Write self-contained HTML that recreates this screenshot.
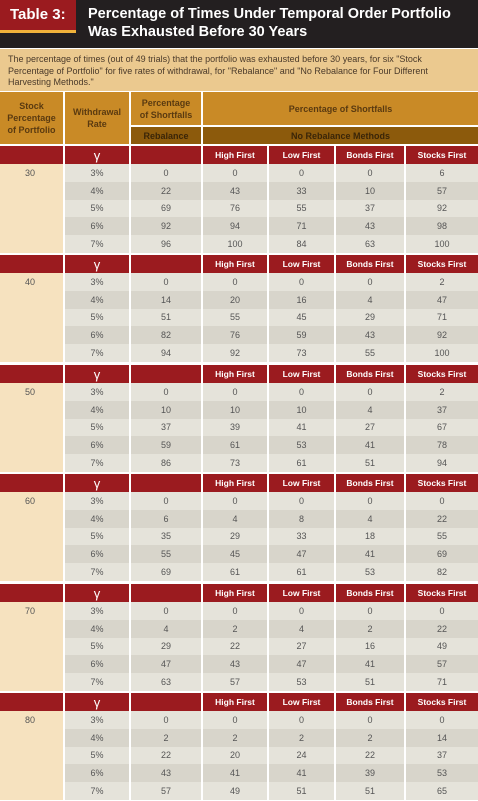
<!DOCTYPE html>
<html><head><meta charset="utf-8"><style>
*{margin:0;padding:0;box-sizing:border-box}
body{width:478px;height:801px;background:#fff;font-family:"Liberation Sans",sans-serif;position:relative;overflow:hidden}
.a{position:absolute}
.c{position:absolute;display:flex;align-items:center;justify-content:center;text-align:center}
.hd{font-weight:bold;color:#5a3a10;font-size:9px;line-height:12px}
.b{position:absolute;left:0;width:478px}
.r{display:flex;height:17.8px}
.r>div{display:flex;align-items:center;justify-content:center;font-size:9px;color:#555;margin-left:2px}
.r>div:nth-child(1){width:63px;margin-left:0;background:#f6e2bf;justify-content:flex-start;padding-left:25px}
.r>div:nth-child(2){width:64px}
.r>div:nth-child(3){width:70px}
.r>div:nth-child(4){width:64px}
.r>div:nth-child(5){width:65px}
.r>div:nth-child(6){width:68px}
.r>div:nth-child(7){width:72px}
.o>div{background:#e5e3da}
.e>div{background:#d8d5cb}
.h{height:18px}
.h>div{background:#9b1b1f !important;color:#fff !important;font-weight:bold;font-size:8.5px}
.g{font-size:13px !important;font-weight:normal !important}
</style></head><body>
<div class="a" style="left:0;top:0;width:478px;height:48px;background:#231f20"></div>
<div class="a" style="left:0;top:0;width:76px;height:30px;background:#9b1b1f"></div>
<div class="a" style="left:0;top:30px;width:76px;height:3px;background:#f0b23a"></div>
<div class="a" style="left:10px;top:6px;color:#fff;font-weight:bold;font-size:15px">Table 3:</div>
<div class="a" style="left:88px;top:5px;color:#fff;font-weight:bold;font-size:14.5px;line-height:18px">Percentage of Times Under Temporal Order Portfolio<br>Was Exhausted Before 30 Years</div>
<div class="a" style="left:0;top:49px;width:478px;height:42px;background:#ebc98f"></div>
<div class="a" style="left:8px;top:54px;color:#4a3a2a;font-size:9px;line-height:11.5px;width:440px">The percentage of times (out of 49 trials) that the portfolio was exhausted before 30 years, for six "Stock Percentage of Portfolio" for five rates of withdrawal, for "Rebalance" and "No Rebalance for Four Different Harvesting Methods."</div>
<div class="c hd" style="left:0;top:92px;width:63px;height:52px;background:#c98a26">Stock<br>Percentage<br>of Portfolio</div>
<div class="c hd" style="left:65px;top:92px;width:64px;height:52px;background:#c98a26">Withdrawal<br>Rate</div>
<div class="c hd" style="left:131px;top:92px;width:70px;height:33px;background:#c98a26">Percentage<br>of Shortfalls</div>
<div class="c hd" style="left:203px;top:92px;width:275px;height:33px;background:#c98a26">Percentage of Shortfalls</div>
<div class="c hd" style="left:131px;top:127px;width:70px;height:17px;background:#8c5a0c;color:#3a2508">Rebalance</div>
<div class="c hd" style="left:203px;top:127px;width:275px;height:17px;background:#8c5a0c;color:#3a2508">No Rebalance Methods</div>

<div class="b" style="top:146px">
<div class="r h"><div></div><div class="g">γ</div><div></div><div>High First</div><div>Low First</div><div>Bonds First</div><div>Stocks First</div></div>
<div class="r o"><div>30</div><div>3%</div><div>0</div><div>0</div><div>0</div><div>0</div><div>6</div></div>
<div class="r e"><div></div><div>4%</div><div>22</div><div>43</div><div>33</div><div>10</div><div>57</div></div>
<div class="r o"><div></div><div>5%</div><div>69</div><div>76</div><div>55</div><div>37</div><div>92</div></div>
<div class="r e"><div></div><div>6%</div><div>92</div><div>94</div><div>71</div><div>43</div><div>98</div></div>
<div class="r o"><div></div><div>7%</div><div>96</div><div>100</div><div>84</div><div>63</div><div>100</div></div>
</div>
<div class="b" style="top:255px">
<div class="r h"><div></div><div class="g">γ</div><div></div><div>High First</div><div>Low First</div><div>Bonds First</div><div>Stocks First</div></div>
<div class="r o"><div>40</div><div>3%</div><div>0</div><div>0</div><div>0</div><div>0</div><div>2</div></div>
<div class="r e"><div></div><div>4%</div><div>14</div><div>20</div><div>16</div><div>4</div><div>47</div></div>
<div class="r o"><div></div><div>5%</div><div>51</div><div>55</div><div>45</div><div>29</div><div>71</div></div>
<div class="r e"><div></div><div>6%</div><div>82</div><div>76</div><div>59</div><div>43</div><div>92</div></div>
<div class="r o"><div></div><div>7%</div><div>94</div><div>92</div><div>73</div><div>55</div><div>100</div></div>
</div>
<div class="b" style="top:365px">
<div class="r h"><div></div><div class="g">γ</div><div></div><div>High First</div><div>Low First</div><div>Bonds First</div><div>Stocks First</div></div>
<div class="r o"><div>50</div><div>3%</div><div>0</div><div>0</div><div>0</div><div>0</div><div>2</div></div>
<div class="r e"><div></div><div>4%</div><div>10</div><div>10</div><div>10</div><div>4</div><div>37</div></div>
<div class="r o"><div></div><div>5%</div><div>37</div><div>39</div><div>41</div><div>27</div><div>67</div></div>
<div class="r e"><div></div><div>6%</div><div>59</div><div>61</div><div>53</div><div>41</div><div>78</div></div>
<div class="r o"><div></div><div>7%</div><div>86</div><div>73</div><div>61</div><div>51</div><div>94</div></div>
</div>
<div class="b" style="top:474px">
<div class="r h"><div></div><div class="g">γ</div><div></div><div>High First</div><div>Low First</div><div>Bonds First</div><div>Stocks First</div></div>
<div class="r o"><div>60</div><div>3%</div><div>0</div><div>0</div><div>0</div><div>0</div><div>0</div></div>
<div class="r e"><div></div><div>4%</div><div>6</div><div>4</div><div>8</div><div>4</div><div>22</div></div>
<div class="r o"><div></div><div>5%</div><div>35</div><div>29</div><div>33</div><div>18</div><div>55</div></div>
<div class="r e"><div></div><div>6%</div><div>55</div><div>45</div><div>47</div><div>41</div><div>69</div></div>
<div class="r o"><div></div><div>7%</div><div>69</div><div>61</div><div>61</div><div>53</div><div>82</div></div>
</div>
<div class="b" style="top:584px">
<div class="r h"><div></div><div class="g">γ</div><div></div><div>High First</div><div>Low First</div><div>Bonds First</div><div>Stocks First</div></div>
<div class="r o"><div>70</div><div>3%</div><div>0</div><div>0</div><div>0</div><div>0</div><div>0</div></div>
<div class="r e"><div></div><div>4%</div><div>4</div><div>2</div><div>4</div><div>2</div><div>22</div></div>
<div class="r o"><div></div><div>5%</div><div>29</div><div>22</div><div>27</div><div>16</div><div>49</div></div>
<div class="r e"><div></div><div>6%</div><div>47</div><div>43</div><div>47</div><div>41</div><div>57</div></div>
<div class="r o"><div></div><div>7%</div><div>63</div><div>57</div><div>53</div><div>51</div><div>71</div></div>
</div>
<div class="b" style="top:693px">
<div class="r h"><div></div><div class="g">γ</div><div></div><div>High First</div><div>Low First</div><div>Bonds First</div><div>Stocks First</div></div>
<div class="r o"><div>80</div><div>3%</div><div>0</div><div>0</div><div>0</div><div>0</div><div>0</div></div>
<div class="r e"><div></div><div>4%</div><div>2</div><div>2</div><div>2</div><div>2</div><div>14</div></div>
<div class="r o"><div></div><div>5%</div><div>22</div><div>20</div><div>24</div><div>22</div><div>37</div></div>
<div class="r e"><div></div><div>6%</div><div>43</div><div>41</div><div>41</div><div>39</div><div>53</div></div>
<div class="r o"><div></div><div>7%</div><div>57</div><div>49</div><div>51</div><div>51</div><div>65</div></div>
</div>
</body></html>
